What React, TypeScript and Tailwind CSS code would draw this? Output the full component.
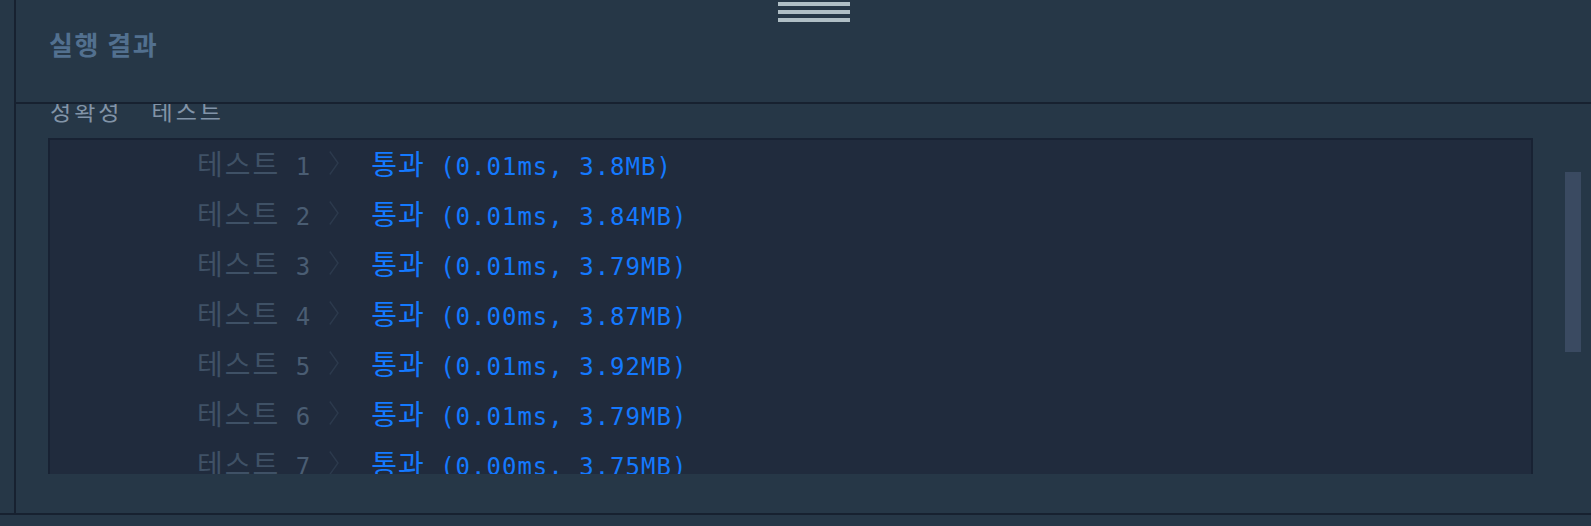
import React from 'react'

const kr = { fontFamily: "'Noto Sans CJK KR', 'Noto Sans', sans-serif" }
const mono = { fontFamily: "'DejaVu Sans Mono', 'Noto Sans CJK KR', monospace" }

const results = [
  { n: 1, text: '(0.01ms, 3.8MB)' },
  { n: 2, text: '(0.01ms, 3.84MB)' },
  { n: 3, text: '(0.01ms, 3.79MB)' },
  { n: 4, text: '(0.00ms, 3.87MB)' },
  { n: 5, text: '(0.01ms, 3.92MB)' },
  { n: 6, text: '(0.01ms, 3.79MB)' },
  { n: 7, text: '(0.00ms, 3.75MB)' },
  { n: 8, text: '(0.01ms, 3.82MB)' },
]

function Chevron() {
  return (
    <svg width="10" height="24" viewBox="0 0 10 24" fill="none" className="shrink-0">
      <polyline points="0.8,0.5 9,12 0.8,23.5" stroke="#2c3a4d" strokeWidth="1.4" />
    </svg>
  )
}

function ResultRow({ n, text }: { n: number; text: string }) {
  return (
    <div className="flex items-center h-[50px] pl-[147px] whitespace-pre">
      <span className="text-[#3f5166]">
        <span className="text-[28px] tracking-[2px]" style={kr}>테스트</span>
        <span className="text-[24px] tracking-[1px] text-[#4a5d73]" style={mono}> {n}</span>
      </span>
      <span className="ml-[18px]">
        <Chevron />
      </span>
      <span className="ml-[32px] text-[#1479ff]">
        <span className="text-[28px] tracking-[1px]" style={kr}>통과</span>
        <span className="text-[24px] tracking-[1px]" style={mono}> {text}</span>
      </span>
    </div>
  )
}

export default function App() {
  return (
    <div className="w-[1591px] h-[526px] bg-[#263747] overflow-hidden flex flex-col">
      <div className="flex h-[513px]">
        <div className="w-[14px]" />
        <div className="w-[2px] bg-[#172130]" />
        <div className="flex-1 flex flex-col relative">
          {/* resize handle */}
          <div className="absolute left-[762px] top-[2px] flex flex-col gap-[4px]">
            <div className="w-[72px] h-[4px] bg-[#afbec5]" />
            <div className="w-[72px] h-[4px] bg-[#afbec5]" />
            <div className="w-[72px] h-[4px] bg-[#afbec5]" />
          </div>
          <div className="h-[102px] pl-[33px] pt-[24px]">
            <h2 className="text-[26px] font-bold leading-[40px] tracking-[1.5px] text-[#52708f]" style={kr}>
              실행 결과
            </h2>
          </div>
          <div className="h-[2px] bg-[#172130]" />
          <div className="flex-1 relative overflow-hidden pl-[32px]">
            <div className="h-[34px] overflow-hidden">
              <div className="-mt-[11px] ml-[2px] flex text-[23px] leading-[34px] tracking-[3px] text-[#8294a8]" style={kr}>
                <span>정확성</span>
                <span className="ml-[29px]">테스트</span>
              </div>
            </div>
            <div className="w-[1485px] h-[336px] bg-[#202b3d] border-2 border-b-0 border-[#182233] overflow-hidden">
              <div className="-mt-[2px]">
                {results.map((r) => (
                  <ResultRow key={r.n} n={r.n} text={r.text} />
                ))}
              </div>
            </div>
            <div className="absolute left-[1549px] top-[68px] w-[16px] h-[180px] bg-[#3a4a61]" />
          </div>
        </div>
      </div>
      <div className="h-[2px] bg-[#172130]" />
      <div className="flex-1" />
    </div>
  )
}
